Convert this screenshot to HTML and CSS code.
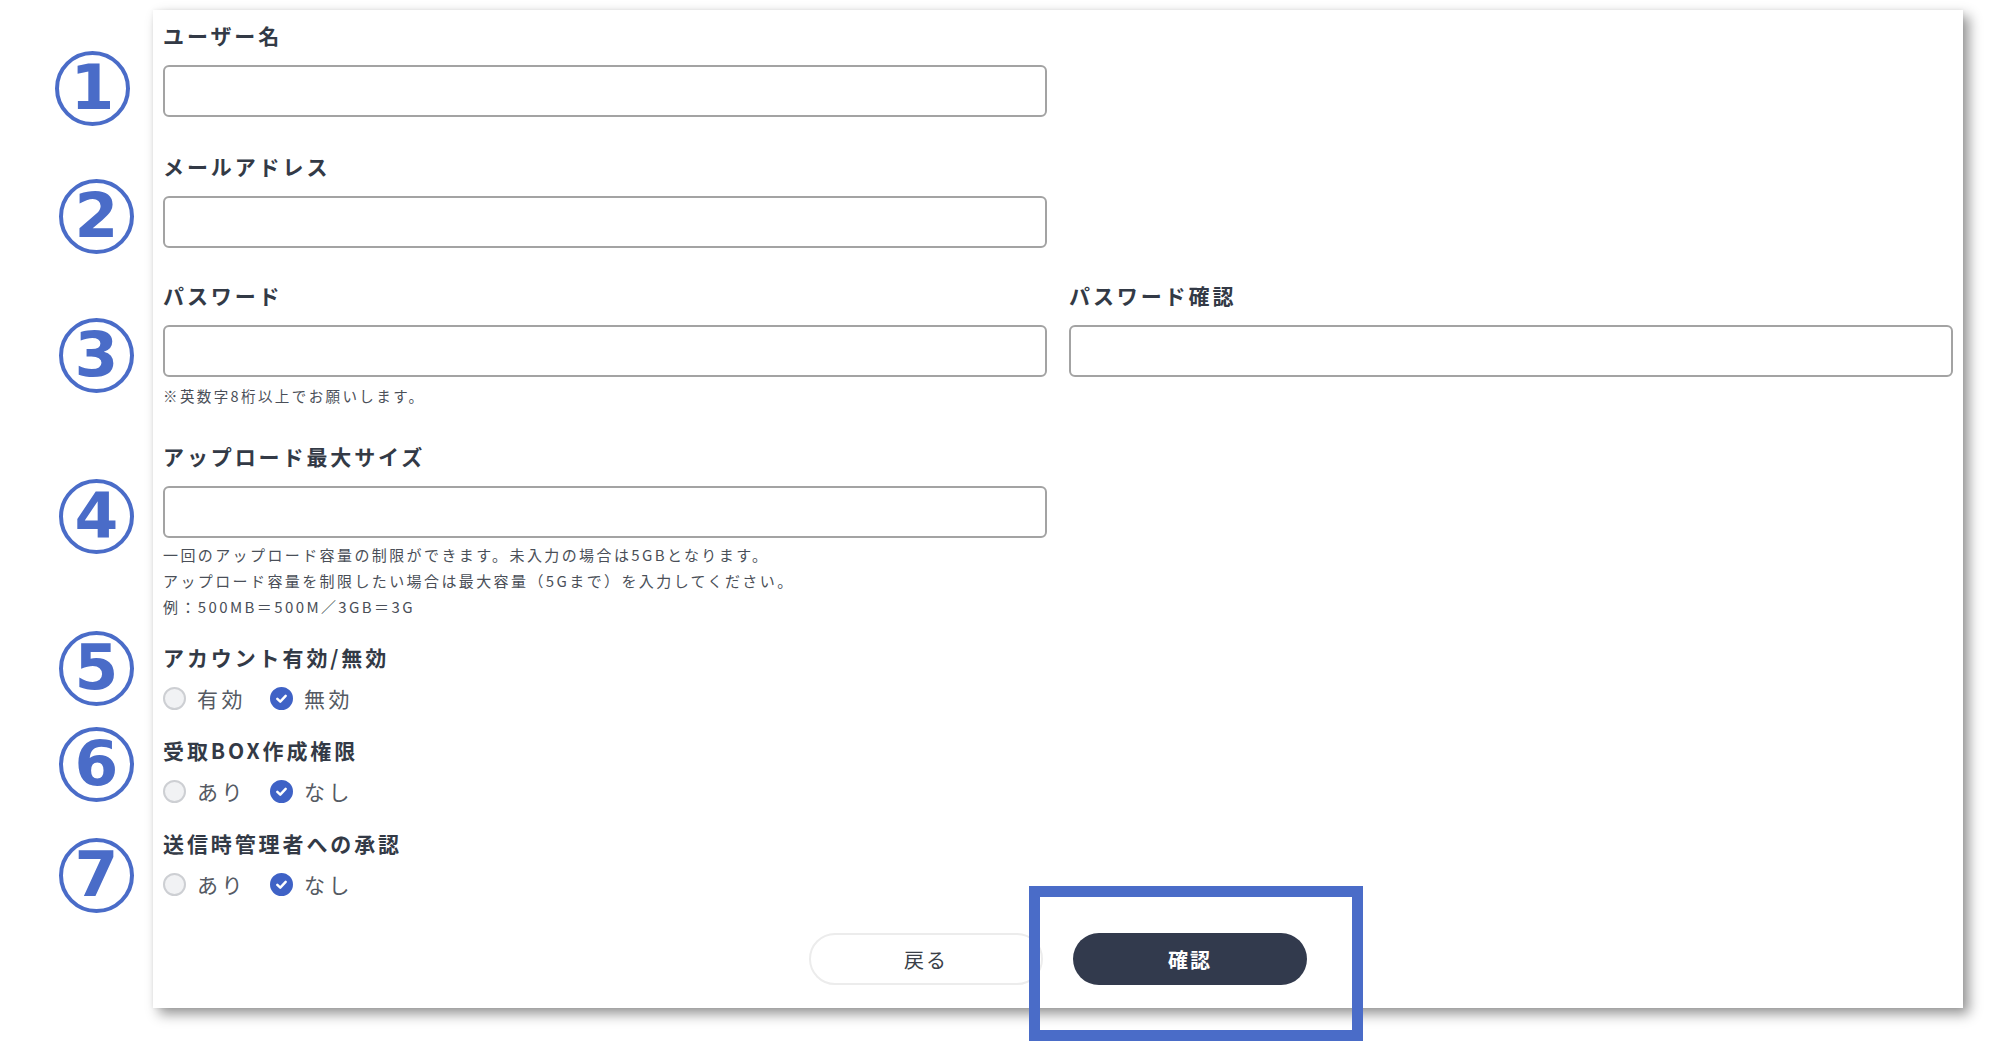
FILE: index.html
```html
<!DOCTYPE html>
<html lang="ja">
<head>
<meta charset="utf-8">
<title>ユーザー登録</title>
<link rel="stylesheet" href="styles.css">
</head>
<body>
<main class="page">
  <section class="card">
    <form class="form">
      <div class="field f1">
        <span class="ann ann-1">1</span>
        <label class="label">ユーザー名</label>
        <input class="input" type="text">
      </div>
      <div class="field f2">
        <span class="ann ann-2">2</span>
        <label class="label">メールアドレス</label>
        <input class="input" type="text">
      </div>
      <div class="field f3">
        <span class="ann ann-3">3</span>
        <label class="label">パスワード</label>
        <input class="input" type="password">
        <p class="hint">※英数字8桁以上でお願いします。</p>
      </div>
      <div class="field f3b">
        <label class="label">パスワード確認</label>
        <input class="input" type="password">
      </div>
      <div class="field f4">
        <span class="ann ann-4">4</span>
        <label class="label">アップロード最大サイズ</label>
        <input class="input" type="text">
        <div class="help">
          <p>一回のアップロード容量の制限ができます。未入力の場合は5GBとなります。</p>
          <p>アップロード容量を制限したい場合は最大容量（5Gまで）を入力してください。</p>
          <p>例：500MB＝500M／3GB＝3G</p>
        </div>
      </div>
      <div class="field f5">
        <span class="ann ann-5">5</span>
        <label class="label">アカウント有効/無効</label>
        <div class="radios">
          <span class="radio"><span class="dot"></span>有効</span>
          <span class="radio"><span class="dot is-checked"><svg viewBox="0 0 20 20"><path d="M5.6 10.4 L8.7 13.3 L14.4 7.2"/></svg></span>無効</span>
        </div>
      </div>
      <div class="field f6">
        <span class="ann ann-6">6</span>
        <label class="label">受取BOX作成権限</label>
        <div class="radios">
          <span class="radio"><span class="dot"></span>あり</span>
          <span class="radio"><span class="dot is-checked"><svg viewBox="0 0 20 20"><path d="M5.6 10.4 L8.7 13.3 L14.4 7.2"/></svg></span>なし</span>
        </div>
      </div>
      <div class="field f7">
        <span class="ann ann-7">7</span>
        <label class="label">送信時管理者への承認</label>
        <div class="radios">
          <span class="radio"><span class="dot"></span>あり</span>
          <span class="radio"><span class="dot is-checked"><svg viewBox="0 0 20 20"><path d="M5.6 10.4 L8.7 13.3 L14.4 7.2"/></svg></span>なし</span>
        </div>
      </div>
      <div class="actions">
        <button class="btn btn-back" type="button">戻る</button>
        <button class="btn btn-confirm" type="button">確認<span class="highlight"></span></button>
      </div>
    </form>
  </section>
</main>
</body>
</html>
```

FILE: styles.css
```css
* { box-sizing: border-box; }
html, body { margin: 0; padding: 0; background: #ffffff; }
body {
  font-family: "Noto Sans CJK JP", "Noto Sans", sans-serif;
  color: #333a46;
}
.page {
  padding: 10px 0 0 153px;
  width: 1993px;
  height: 1045px;
  overflow: hidden;
}
.card {
  width: 1810px;
  background: #fff;
  padding: 10px 10px 23px 10px;
  box-shadow: 6px 6px 12px rgba(0,0,0,0.42), 0 0 4px rgba(0,0,0,0.06);
}
.form {
  display: grid;
  grid-template-columns: 884px 884px;
  column-gap: 22px;
  align-items: start;
}
.field {
  position: relative;
  grid-column: 1;
  display: flex;
  flex-direction: column;
}
.f2 { margin-top: 34px; }
.f3 { margin-top: 32px; }
.f3b { margin-top: 32px; grid-column: 2; grid-row: 3; }
.f4 { margin-top: 35px; }
.f5, .f6, .f7 { margin-top: 22px; }

.label {
  display: block;
  font-size: 21px;
  line-height: 30px;
  font-weight: 700;
  letter-spacing: 2.9px;
  color: #333a46;
}
.input {
  display: block;
  width: 100%;
  height: 52px;
  margin: 15px 0 0 0;
  border: 2px solid #a3a3a3;
  border-radius: 6px;
  background: #fff;
  font: inherit;
  outline: none;
}
.hint {
  margin: 9px 0 0 0;
  font-size: 14.5px;
  line-height: 20px;
  letter-spacing: 2.4px;
  color: #4a4f58;
}
.help {
  margin-top: 4px;
  font-size: 15px;
  line-height: 26px;
  letter-spacing: 2.4px;
  color: #4a4f58;
}
.help p { margin: 0; }

.radios {
  display: flex;
  gap: 24px;
  margin-top: 11px;
  height: 30px;
  align-items: center;
}
.radio {
  display: flex;
  align-items: center;
  gap: 11px;
  font-size: 21px;
  line-height: 30px;
  letter-spacing: 3.5px;
  color: #555a63;
}
.dot {
  width: 23px;
  height: 23px;
  border-radius: 50%;
  border: 2px solid #cdcfd3;
  background: #f1f2f4;
  display: flex;
  align-items: center;
  justify-content: center;
}
.dot.is-checked {
  background: #3f62c6;
  border-color: #3f62c6;
}
.dot svg { width: 21px; height: 21px; }
.dot path {
  fill: none;
  stroke: #fff;
  stroke-width: 2.6;
  stroke-linecap: round;
  stroke-linejoin: round;
}

.actions {
  grid-column: 1 / span 2;
  display: flex;
  justify-content: center;
  gap: 30px;
  margin-top: 34px;
}
.btn {
  position: relative;
  width: 234px;
  height: 52px;
  border-radius: 26px;
  font-family: "Noto Sans CJK JP", sans-serif;
  font-size: 20px;
  letter-spacing: 2px;
  padding: 0;
  cursor: pointer;
}
.btn-back {
  background: #fff;
  border: 2px solid #ececec;
  color: #3a3f48;
}
.btn-confirm {
  background: #323a4d;
  border: none;
  color: #fff;
  font-weight: 700;
}
.highlight {
  position: absolute;
  left: -44px;
  top: -47px;
  width: 334px;
  height: 155px;
  border: 11px solid #4a6cc8;
  pointer-events: none;
}

.ann {
  position: absolute;
  left: -104px;
  width: 75px;
  height: 75px;
  border: 4px solid #4a6cc8;
  border-radius: 50%;
  display: flex;
  align-items: center;
  justify-content: center;
  font-family: "DejaVu Sans", sans-serif;
  font-weight: 700;
  font-size: 63px;
  line-height: 1;
  color: #4a6cc8;
  padding-bottom: 2px;
}
.ann-1 { top: 31px; left: -108px; }
.ann-2 { top: 28px; }
.ann-3 { top: 38px; }
.ann-4 { top: 38px; }
.ann-5 { top: -11px; }
.ann-6 { top: -8px; }
.ann-7 { top: 10px; }
```
